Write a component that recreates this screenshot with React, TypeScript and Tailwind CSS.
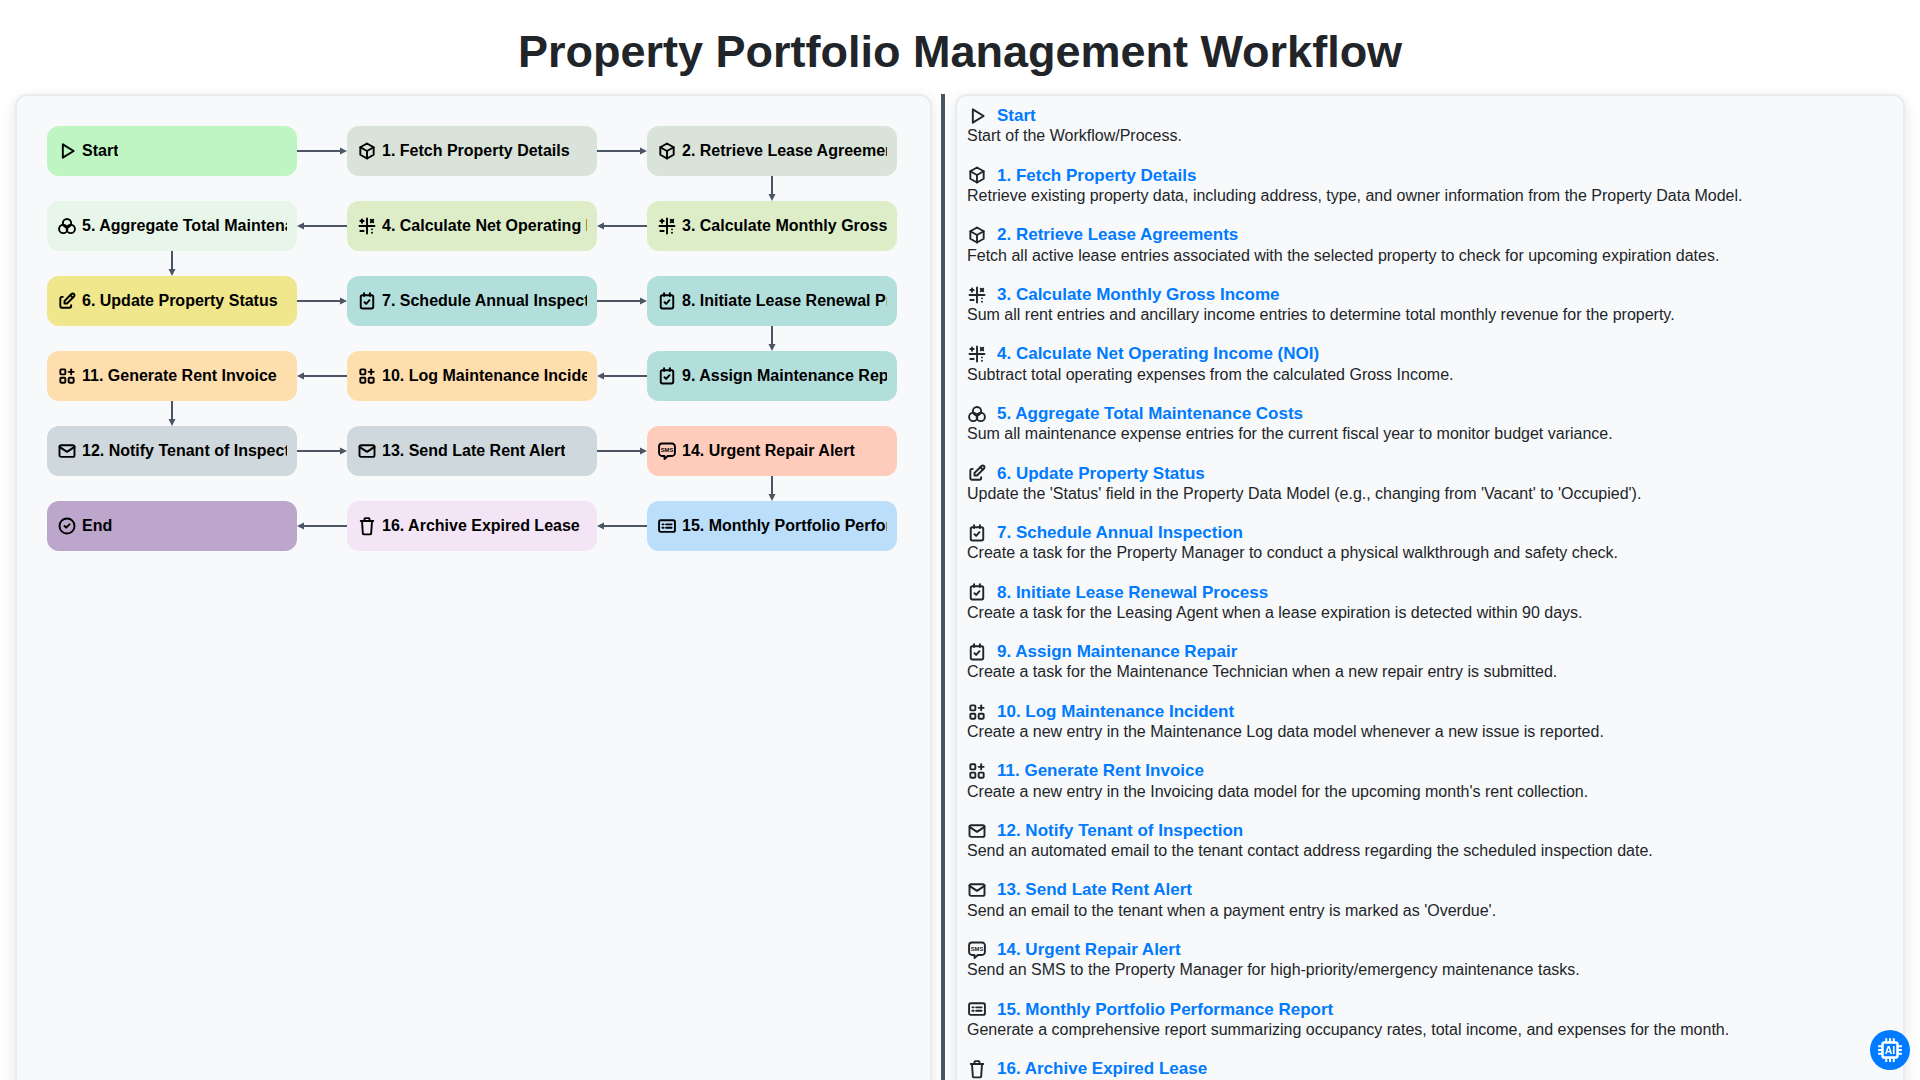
import React from "react";
import { TbPlayerPlay, TbBox, TbMathSymbols, TbEdit, TbApps, TbMail, TbCircleCheck } from "react-icons/tb";

type IconProps = { className?: string };

const Svg = ({ className, children }: IconProps & { children: React.ReactNode }) => (
  <svg viewBox="0 0 24 24" fill="none" stroke="currentColor" strokeWidth="2" strokeLinecap="round" strokeLinejoin="round" className={className}>
    {children}
  </svg>
);
const CalCheck = ({ className }: IconProps) => (
  <Svg className={className}>
    <rect x="4.5" y="5" width="15" height="16" rx="2" />
    <path d="M8.5 2.5v3.5M15.5 2.5v3.5M9 13.5l2 2 4-4.5" />
  </Svg>
);
const Sms = ({ className }: IconProps) => (
  <Svg className={className}>
    <path d="M6 3h12a3.5 3.5 0 0 1 3.5 3.5v8a3.5 3.5 0 0 1-3.5 3.5h-5l-4 3.5V18H6a3.5 3.5 0 0 1-3.5-3.5v-8A3.5 3.5 0 0 1 6 3z" />
    <text x="12" y="13" textAnchor="middle" fontSize="7" fontWeight="700" fontFamily="'Liberation Sans', sans-serif" fill="currentColor" stroke="none">SMS</text>
  </Svg>
);
const Report = ({ className }: IconProps) => (
  <Svg className={className}>
    <rect x="2.5" y="5" width="19" height="14" rx="2" />
    <path d="M6.5 10h1.5M6.5 14h1.5M11 10h6.5M11 14h6.5" />
  </Svg>
);
const TrashIcon = ({ className }: IconProps) => (
  <Svg className={className}>
    <path d="M4.5 6h15M9 6V3.5a1 1 0 0 1 1-1h4a1 1 0 0 1 1 1V6M6 6l1 15a1 1 0 0 0 1 1h8a1 1 0 0 0 1-1l1-15" />
  </Svg>
);
const Cluster = ({ className }: IconProps) => (
  <Svg className={className}>
    <circle cx="12" cy="8.5" r="5" />
    <circle cx="7.5" cy="15.5" r="5" />
    <circle cx="16.5" cy="15.5" r="5" />
  </Svg>
);

const steps: { t: string; d: string; I: React.ComponentType<IconProps> }[] = [
  { t: "Start", d: "Start of the Workflow/Process.", I: TbPlayerPlay },
  { t: "1. Fetch Property Details", d: "Retrieve existing property data, including address, type, and owner information from the Property Data Model.", I: TbBox },
  { t: "2. Retrieve Lease Agreements", d: "Fetch all active lease entries associated with the selected property to check for upcoming expiration dates.", I: TbBox },
  { t: "3. Calculate Monthly Gross Income", d: "Sum all rent entries and ancillary income entries to determine total monthly revenue for the property.", I: TbMathSymbols },
  { t: "4. Calculate Net Operating Income (NOI)", d: "Subtract total operating expenses from the calculated Gross Income.", I: TbMathSymbols },
  { t: "5. Aggregate Total Maintenance Costs", d: "Sum all maintenance expense entries for the current fiscal year to monitor budget variance.", I: Cluster },
  { t: "6. Update Property Status", d: "Update the 'Status' field in the Property Data Model (e.g., changing from 'Vacant' to 'Occupied').", I: TbEdit },
  { t: "7. Schedule Annual Inspection", d: "Create a task for the Property Manager to conduct a physical walkthrough and safety check.", I: CalCheck },
  { t: "8. Initiate Lease Renewal Process", d: "Create a task for the Leasing Agent when a lease expiration is detected within 90 days.", I: CalCheck },
  { t: "9. Assign Maintenance Repair", d: "Create a task for the Maintenance Technician when a new repair entry is submitted.", I: CalCheck },
  { t: "10. Log Maintenance Incident", d: "Create a new entry in the Maintenance Log data model whenever a new issue is reported.", I: TbApps },
  { t: "11. Generate Rent Invoice", d: "Create a new entry in the Invoicing data model for the upcoming month's rent collection.", I: TbApps },
  { t: "12. Notify Tenant of Inspection", d: "Send an automated email to the tenant contact address regarding the scheduled inspection date.", I: TbMail },
  { t: "13. Send Late Rent Alert", d: "Send an email to the tenant when a payment entry is marked as 'Overdue'.", I: TbMail },
  { t: "14. Urgent Repair Alert", d: "Send an SMS to the Property Manager for high-priority/emergency maintenance tasks.", I: Sms },
  { t: "15. Monthly Portfolio Performance Report", d: "Generate a comprehensive report summarizing occupancy rates, total income, and expenses for the month.", I: Report },
  { t: "16. Archive Expired Lease", d: "", I: TrashIcon },
];

const Node = ({ label, I, bg }: { label: string; I: React.ComponentType<IconProps>; bg: string }) => (
  <div className={`h-[50px] w-[250px] rounded-xl px-2.5 flex items-center overflow-hidden text-black font-bold text-base whitespace-nowrap ${bg}`}>
    <I className="w-5 h-5 shrink-0 mr-[5px] text-black [stroke-width:2.3]" />
    <span className="overflow-hidden">{label}</span>
  </div>
);

const ArrowR = () => (
  <svg viewBox="0 0 50 50" className="w-[50px] h-[50px] text-[#4b5563]" fill="currentColor">
    <rect x="0" y="24" width="45" height="2" />
    <path d="M43 21.5 50 25l-7 3.5z" />
  </svg>
);
const ArrowL = () => (
  <svg viewBox="0 0 50 50" className="w-[50px] h-[50px] text-[#4b5563]" fill="currentColor">
    <rect x="5" y="24" width="45" height="2" />
    <path d="M7 21.5 0 25l7 3.5z" />
  </svg>
);
const ArrowD = () => (
  <svg viewBox="0 0 250 25" className="w-[250px] h-[25px] text-[#4b5563]" fill="currentColor">
    <rect x="124" y="0" width="2" height="20" />
    <path d="M121.5 18 125 25l3.5-7z" />
  </svg>
);
const E = () => <div />;

export default function App() {
  return (
    <div className="h-screen overflow-hidden bg-white font-['Liberation_Sans',Arial,sans-serif]">
      <h1 className="text-[45px] leading-[54px] font-bold text-[#212529] text-center pt-[25px] h-[94px]">Property Portfolio Management Workflow</h1>
      <div className="flex pl-[15px] pr-[15px] h-[1100px]">
        <div className="w-[917px] border-2 border-[#e9ecef] rounded-xl bg-[#f8f9fa] shadow-[0_4px_15px_rgba(0,0,0,0.1)] pl-[30px] pt-[30px] shrink-0">
          <div className="grid grid-cols-[250px_50px_250px_50px_250px] grid-rows-[50px_25px_50px_25px_50px_25px_50px_25px_50px_25px_50px]">
            <Node label="Start" I={TbPlayerPlay} bg="bg-[#bff5c3]" /><ArrowR /><Node label="1. Fetch Property Details" I={TbBox} bg="bg-[#d9e3da]" /><ArrowR /><Node label="2. Retrieve Lease Agreements" I={TbBox} bg="bg-[#d9e3da]" />
            <E /><E /><E /><E /><ArrowD />
            <Node label="5. Aggregate Total Maintenance Costs" I={Cluster} bg="bg-[#e8f5e9]" /><ArrowL /><Node label="4. Calculate Net Operating Income (NOI)" I={TbMathSymbols} bg="bg-[#dcedc8]" /><ArrowL /><Node label="3. Calculate Monthly Gross Income" I={TbMathSymbols} bg="bg-[#dcedc8]" />
            <ArrowD /><E /><E /><E /><E />
            <Node label="6. Update Property Status" I={TbEdit} bg="bg-[#f0e68c]" /><ArrowR /><Node label="7. Schedule Annual Inspection" I={CalCheck} bg="bg-[#b2dfdb]" /><ArrowR /><Node label="8. Initiate Lease Renewal Process" I={CalCheck} bg="bg-[#b2dfdb]" />
            <E /><E /><E /><E /><ArrowD />
            <Node label="11. Generate Rent Invoice" I={TbApps} bg="bg-[#ffdead]" /><ArrowL /><Node label="10. Log Maintenance Incident" I={TbApps} bg="bg-[#ffdead]" /><ArrowL /><Node label="9. Assign Maintenance Repair" I={CalCheck} bg="bg-[#b2dfdb]" />
            <ArrowD /><E /><E /><E /><E />
            <Node label="12. Notify Tenant of Inspection" I={TbMail} bg="bg-[#cfd8dc]" /><ArrowR /><Node label="13. Send Late Rent Alert" I={TbMail} bg="bg-[#cfd8dc]" /><ArrowR /><Node label="14. Urgent Repair Alert" I={Sms} bg="bg-[#ffccbc]" />
            <E /><E /><E /><E /><ArrowD />
            <Node label="End" I={TbCircleCheck} bg="bg-[#bca6cc]" /><ArrowL /><Node label="16. Archive Expired Lease" I={TrashIcon} bg="bg-[#f3e5f5]" /><ArrowL /><Node label="15. Monthly Portfolio Performance Report" I={Report} bg="bg-[#bbdefb]" />
          </div>
        </div>
        <div className="w-1 bg-[#4b5563] ml-[9px] mr-[10px] shrink-0" />
        <div className="flex-1 border-2 border-[#e9ecef] rounded-xl bg-[#f8f9fa] shadow-[0_4px_15px_rgba(0,0,0,0.1)] pl-2.5 pt-[9.4px] overflow-hidden">
          {steps.map((s) => (
            <div key={s.t} className="h-[59.57px]">
              <div className="flex items-center h-[21px] gap-2.5">
                <s.I className="w-5 h-5 shrink-0 text-[#212529] [stroke-width:2.3]" />
                <span className="text-[17px] font-bold text-[#007bff]">{s.t}</span>
              </div>
              <p className="text-base leading-[20px] text-[#212529]">{s.d}</p>
            </div>
          ))}
        </div>
      </div>
      <div className="fixed right-2.5 bottom-2.5 w-10 h-10 rounded-full bg-[#007bff] flex items-center justify-center">
        <svg viewBox="0 0 24 24" className="w-[30px] h-[30px] text-white" fill="none" stroke="currentColor" strokeWidth="2">
          <rect x="6" y="6" width="12" height="12" rx="1.5" />
          <path d="M9 2.5v3M12 2.5v3M15 2.5v3M9 18.5v3M12 18.5v3M15 18.5v3M2.5 9h3M2.5 12h3M2.5 15h3M18.5 9h3M18.5 12h3M18.5 15h3" strokeWidth="1.6" />
          <text x="12" y="15.1" textAnchor="middle" fontSize="8.5" fontWeight="700" fontFamily="'Liberation Sans', sans-serif" fill="currentColor" stroke="none">AI</text>
        </svg>
      </div>
    </div>
  );
}
